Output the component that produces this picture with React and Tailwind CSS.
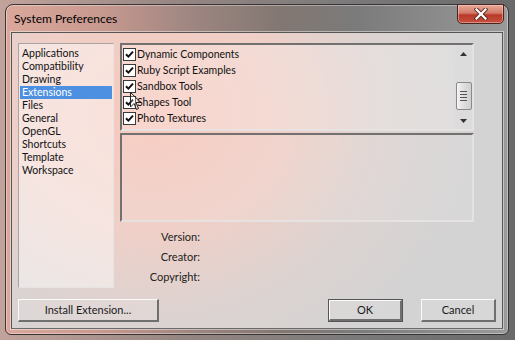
import React from "react";

const categories = [
  "Applications",
  "Compatibility",
  "Drawing",
  "Extensions",
  "Files",
  "General",
  "OpenGL",
  "Shortcuts",
  "Template",
  "Workspace",
];

const extensions = [
  "Dynamic Components",
  "Ruby Script Examples",
  "Sandbox Tools",
  "Shapes Tool",
  "Photo Textures",
];

function Check() {
  return (
    <span className="flex h-[13px] w-[13px] shrink-0 items-center justify-center border border-[#3a3a3a] bg-white">
      <svg width="9" height="9" viewBox="0 0 9 9">
        <path d="M1 4.2 L3.4 6.6 L8 1.6" fill="none" stroke="#111" strokeWidth="2" />
      </svg>
    </span>
  );
}

function Btn({ children, def, className }) {
  return (
    <div
      className={
        "flex h-[23px] items-center justify-center text-[11px] text-[#1a1a1a] " +
        (def ? "border border-[#555] " : "") +
        className
      }
    >
      <div className="flex h-full w-full items-center justify-center border-t border-l border-t-white/90 border-l-white/90 border-r-2 border-b-2 border-r-[#6f6f6f] border-b-[#6f6f6f] bg-white/10">
        {children}
      </div>
    </div>
  );
}

export default function App() {
  return (
    <div className="relative h-[340px] w-[515px] overflow-hidden bg-[linear-gradient(90deg,#c2a39c_0%,#958682_35%,#7d7b7b_65%,#6a6a6a_100%)] pl-[5px] pt-[4px] font-['Lato',sans-serif]">
      <div className="flex h-[331px] w-[504px] flex-col rounded-t-[8px] rounded-b-[6px] border border-[#3a3434] bg-[linear-gradient(90deg,#dba79b_0%,#c99a90_18%,#9c8580_38%,#827772_55%,#7b7b7b_70%,#8d8d8d_88%,#9a9a9a_100%)] shadow-[inset_0_0_0_1px_rgba(255,255,255,0.35)]">
        {/* title bar */}
        <div className="flex h-[27px] shrink-0 items-start justify-between pl-[8px] pr-[4px]">
          <span className="mt-[6px] text-[12px] leading-[15px] text-black">System Preferences</span>
          <div className="-mt-[1px] flex h-[20px] w-[47px] items-center justify-center rounded-b-[5px] border border-[#4a2420] bg-[linear-gradient(180deg,#e8a898_0%,#d47a68_45%,#b8392a_55%,#c8503e_100%)] shadow-[inset_0_0_0_1px_rgba(255,220,210,0.45)]">
            <svg width="14" height="12" viewBox="0 0 14 12">
              <path d="M2.5 1.5 L11.5 10.5 M11.5 1.5 L2.5 10.5" stroke="#5a2a24" strokeWidth="4" strokeLinecap="square" />
              <path d="M2.5 1.5 L11.5 10.5 M11.5 1.5 L2.5 10.5" stroke="#ffffff" strokeWidth="2.2" strokeLinecap="square" />
            </svg>
          </div>
        </div>

        {/* client area */}
        <div className="mx-[5px] flex h-[297px] flex-col border border-[#555] border-b-[#6a6a6a] bg-[radial-gradient(ellipse_330px_290px_at_140px_80px,#f7c8bc_0%,#efcfc7_40%,#dcd3d1_70%,#d3d3d3_100%)] px-[6px] pt-[10px] shadow-[0_0_0_1px_rgba(255,255,255,0.45)]">
          <div className="flex h-[245px] gap-[6px]">
            {/* category list */}
            <div className="flex w-[96px] flex-col border border-[#a9a4a3] border-b-[#e8e4e3] border-r-[#e8e4e3] bg-white/45 px-[1px] pt-[3px]">
              {categories.map((c) => (
                <div
                  key={c}
                  className={
                    "h-[13px] pl-[2px] text-[10.5px] leading-[13px] " +
                    (c === "Extensions" ? "bg-[#4d8fe0] text-white" : "text-[#111]")
                  }
                >
                  {c}
                </div>
              ))}
            </div>

            {/* right column */}
            <div className="flex w-[354px] flex-col">
              <div className="relative flex h-[88px] border-2 border-[#737070] border-b-[#e6e2e1] border-r-[#e6e2e1] bg-white/25">
                <div className="flex flex-1 flex-col pl-[1px] pt-[1px]">
                  {extensions.map((e) => (
                    <div key={e} className="flex h-[16px] items-center gap-[1px]">
                      <Check />
                      <span className="text-[10.5px] leading-[16px] text-[#111]">{e}</span>
                    </div>
                  ))}
                </div>
                {/* scrollbar */}
                <div className="flex w-[17px] flex-col items-center bg-[#dcdcdc]/90">
                  <div className="flex h-[17px] w-full items-center justify-center">
                    <svg width="7" height="4" viewBox="0 0 7 4">
                      <path d="M0 4 L3.5 0 L7 4 Z" fill="#333" />
                    </svg>
                  </div>
                  <div className="mt-[20px] flex h-[28px] w-[16px] flex-col items-center justify-center gap-[2px] rounded-[2px] border border-[#8a8a8a] bg-[linear-gradient(90deg,#f4f4f4,#dedede_50%,#cfcfcf)]">
                    <span className="h-[1px] w-[7px] bg-[#555]" />
                    <span className="h-[1px] w-[7px] bg-[#555]" />
                    <span className="h-[1px] w-[7px] bg-[#555]" />
                    <span className="h-[1px] w-[7px] bg-[#555]" />
                  </div>
                  <div className="mt-auto flex h-[17px] w-full items-center justify-center">
                    <svg width="7" height="4" viewBox="0 0 7 4">
                      <path d="M0 0 L3.5 4 L7 0 Z" fill="#333" />
                    </svg>
                  </div>
                </div>
              </div>

              <div className="mt-[2px] h-[89px] border-2 border-[#737070] border-b-[#e6e2e1] border-r-[#e6e2e1] bg-white/10" />

              <div className="mt-[8px] grid grid-cols-[80px_1fr] gap-y-[6px] text-[11px] leading-[14px] text-[#222]">
                <span className="text-right">Version:</span>
                <span />
                <span className="text-right">Creator:</span>
                <span />
                <span className="text-right">Copyright:</span>
                <span />
              </div>
            </div>
          </div>

          {/* buttons */}
          <div className="mt-[11px] flex items-center">
            <Btn className="w-[141px]">Install Extension...</Btn>
            <div className="flex-1" />
            <Btn def className="w-[75px]">OK</Btn>
            <Btn className="ml-[18px] w-[75px]">Cancel</Btn>
          </div>
        </div>
      </div>

      {/* mouse cursor */}
      <svg className="absolute left-[130px] top-[92px]" width="12" height="19" viewBox="0 0 12 19">
        <path d="M0.5 0.5 L0.5 15 L4 11.5 L6.5 17.5 L8.5 16.5 L6 10.5 L11 10.5 Z" fill="white" fillOpacity="0.25" stroke="#222" strokeWidth="1" />
      </svg>
    </div>
  );
}
